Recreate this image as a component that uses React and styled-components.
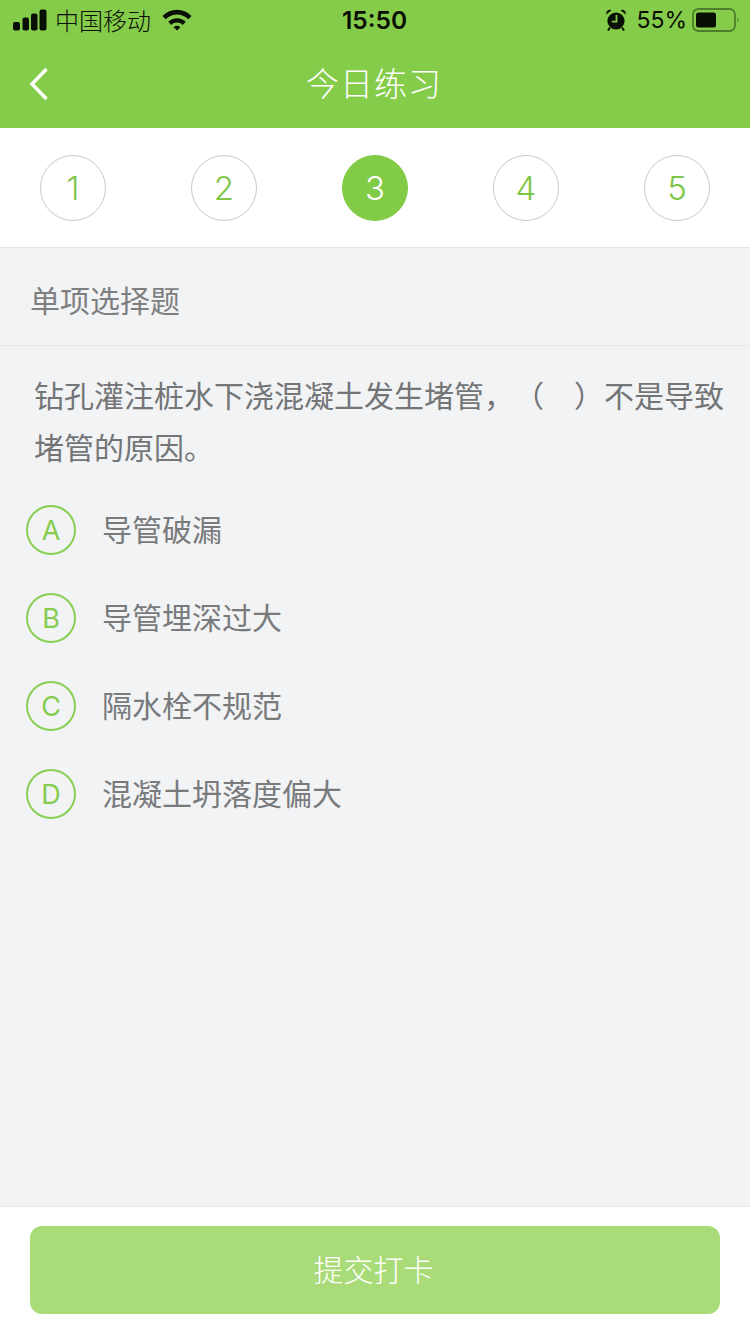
import React from "react";
import styled, { createGlobalStyle } from "styled-components";

const CJK = `"Noto Sans CJK SC", "Noto Sans", sans-serif`;
const LATIN = `"Liberation Sans", "Noto Sans CJK SC", sans-serif`;

const Global = createGlobalStyle`
  html, body { margin: 0; padding: 0; background: #f2f3f5; }
  * { box-sizing: border-box; }
`;

const Page = styled.div`
  width: 750px;
  height: 1334px;
  display: flex;
  flex-direction: column;
  background: #f2f3f5;
  font-family: ${CJK};
  text-spacing-trim: space-all;
  overflow: hidden;
`;

const Header = styled.header`
  height: 128px;
  background: #85cc4b;
  display: flex;
  flex-direction: column;
`;

const StatusBar = styled.div`
  height: 40px;
  padding: 0 10px 0 13px;
  display: grid;
  grid-template-columns: 1fr auto 1fr;
  align-items: center;
  color: #0a0f05;
`;

const StatusSide = styled.div`
  display: flex;
  align-items: center;
  justify-content: ${(p) => (p.$end ? "flex-end" : "flex-start")};
`;

const Carrier = styled.span`
  font-size: 24px;
  line-height: 40px;
  font-weight: 300;
  margin: 0 11px 0 8px;
`;

const Clock = styled.span`
  font-family: "Inter", ${LATIN};
  font-size: 24.5px;
  font-weight: 600;
  line-height: 40px;
  margin-right: 4px;
`;

const Percent = styled.span`
  font-family: "Inter", ${LATIN};
  font-size: 23px;
  font-weight: 400;
  line-height: 40px;
  margin: 0 5px 0 10px;
`;

const NavBar = styled.div`
  flex: 1;
  position: relative;
  display: flex;
  align-items: center;
  justify-content: center;
  padding: 0 2px 4px 0;
`;

const NavTitle = styled.h1`
  margin: 0;
  font-size: 33px;
  font-weight: 300;
  color: #fff;
  letter-spacing: 1px;
`;

const BackIcon = styled.svg`
  position: absolute;
  left: 29px;
  top: 27px;
`;

const Steps = styled.nav`
  height: 120px;
  background: #fff;
  border-bottom: 1px solid #e6e7e9;
  padding: 0 40px;
  display: flex;
  align-items: center;
  justify-content: space-between;
`;

const Step = styled.div`
  width: 66px;
  height: 66px;
  border-radius: 50%;
  display: flex;
  align-items: center;
  justify-content: center;
  font-family: "Inter", ${LATIN};
  font-size: 33px;
  font-weight: 300;
  color: ${(p) => (p.$active ? "#fff" : "#7dc648")};
  background: ${(p) => (p.$active ? "#82cb47" : "#fff")};
  border: 1px solid ${(p) => (p.$active ? "#82cb47" : "#c9c9c9")};
`;

const SectionLabel = styled.div`
  height: 98px;
  padding: 4px 30px 0;
  display: flex;
  align-items: center;
  border-bottom: 1px solid #e6e7e9;
  font-size: 30px;
  font-weight: 400;
  color: #7d7f81;
`;

const Main = styled.main`
  flex: 1;
  display: flex;
  flex-direction: column;
`;

const Question = styled.p`
  margin: 0;
  padding: 22px 20px 0 34px;
  font-size: 30px;
  line-height: 52px;
  font-weight: 400;
  color: #737577;
`;

const Options = styled.ul`
  list-style: none;
  margin: 33px 0 0;
  padding: 0 0 0 26px;
  display: flex;
  flex-direction: column;
  gap: 38px;
`;

const Option = styled.li`
  height: 50px;
  display: flex;
  align-items: center;
  gap: 26px;
`;

const Badge = styled.span`
  width: 50px;
  height: 50px;
  border-radius: 50%;
  border: 2px solid #88cf54;
  display: flex;
  align-items: center;
  justify-content: center;
  font-family: "Inter", ${LATIN};
  font-size: 27px;
  font-weight: 400;
  color: #85cc4f;
`;

const OptionText = styled.span`
  font-size: 30px;
  font-weight: 400;
  color: #787a7c;
  padding-bottom: 4px;
`;

const Footer = styled.footer`
  height: 128px;
  background: #fff;
  border-top: 1px solid #e8e9eb;
  padding: 19px 30px 0;
`;

const Submit = styled.button`
  width: 690px;
  height: 88px;
  border: 0;
  border-radius: 12px;
  background: #a9dc78;
  color: #fff;
  font-family: ${CJK};
  font-size: 30px;
  font-weight: 300;
  padding: 0 3px 4px 0;
  display: block;
`;

const SignalIcon = () => (
  <svg width="34" height="22" viewBox="0 0 34 22">
    <rect x="0" y="13" width="7" height="8.5" rx="2" fill="#0a0f05" />
    <rect x="9.5" y="8.5" width="6.5" height="13" rx="2" fill="#0a0f05" />
    <rect x="18" y="4.5" width="6.5" height="17" rx="2" fill="#0a0f05" />
    <rect x="26.5" y="0.5" width="7" height="21" rx="2" fill="#0a0f05" />
  </svg>
);

const WifiIcon = () => (
  <svg width="30" height="22" viewBox="0 0 30 22">
    <path d="M0.5 7 C8.5 -1.2 21.5 -1.2 29.5 7 L26.4 10.2 C20 3.8 10 3.8 3.6 10.2 Z" fill="#0a0f05" />
    <path d="M6.2 12.8 C11 8 19 8 23.8 12.8 L20.7 15.9 C17.4 12.8 12.6 12.8 9.3 15.9 Z" fill="#0a0f05" />
    <path d="M11.6 18.2 C13.6 16.4 16.4 16.4 18.4 18.2 L15 21.6 Z" fill="#0a0f05" />
  </svg>
);

const AlarmIcon = () => (
  <svg width="20" height="22" viewBox="0 0 20 22">
    <circle cx="10" cy="12" r="8.6" fill="#0a0f05" />
    <path d="M0.4 5.6 L5.4 1.2 C3 -0.2 -0.6 2 0.4 5.6 Z M19.6 5.6 L14.6 1.2 C17 -0.2 20.6 2 19.6 5.6 Z" fill="#0a0f05" />
    <path d="M4 18.5 L2 21.5 M16 18.5 L18 21.5" stroke="#0a0f05" strokeWidth="2" />
    <path d="M10.5 6 V12.6 H5.8" fill="none" stroke="#85cc4b" strokeWidth="1.8" />
  </svg>
);

const BatteryIcon = () => (
  <svg width="48" height="24" viewBox="0 0 48 24">
    <rect x="1" y="1" width="42" height="22" rx="5.5" fill="none" stroke="#4d7f2b" strokeWidth="1.8" />
    <rect x="4" y="4.5" width="20" height="15" rx="2.5" fill="#0a0f05" />
    <path d="M45.5 9 C46.8 10 46.8 14 45.5 15 Z" fill="#4d7f2b" />
  </svg>
);

const options = [
  ["A", "导管破漏"],
  ["B", "导管埋深过大"],
  ["C", "隔水栓不规范"],
  ["D", "混凝土坍落度偏大"],
];

export default function App() {
  return (
    <Page>
      <Global />
      <Header>
        <StatusBar>
          <StatusSide>
            <SignalIcon />
            <Carrier>中国移动</Carrier>
            <WifiIcon />
          </StatusSide>
          <Clock>15:50</Clock>
          <StatusSide $end>
            <AlarmIcon />
            <Percent>55%</Percent>
            <BatteryIcon />
          </StatusSide>
        </StatusBar>
        <NavBar>
          <BackIcon width="20" height="34" viewBox="0 0 20 34">
            <path d="M17.5 2 L3 17 L17.5 32" fill="none" stroke="#fff" strokeWidth="3.4" />
          </BackIcon>
          <NavTitle>今日练习</NavTitle>
        </NavBar>
      </Header>
      <Steps>
        {[1, 2, 3, 4, 5].map((n) => (
          <Step key={n} $active={n === 3}>
            {n}
          </Step>
        ))}
      </Steps>
      <Main>
        <SectionLabel>单项选择题</SectionLabel>
        <Question>钻孔灌注桩水下浇混凝土发生堵管，（　）不是导致堵管的原因。</Question>
        <Options>
          {options.map(([letter, text]) => (
            <Option key={letter}>
              <Badge>{letter}</Badge>
              <OptionText>{text}</OptionText>
            </Option>
          ))}
        </Options>
      </Main>
      <Footer>
        <Submit>提交打卡</Submit>
      </Footer>
    </Page>
  );
}
